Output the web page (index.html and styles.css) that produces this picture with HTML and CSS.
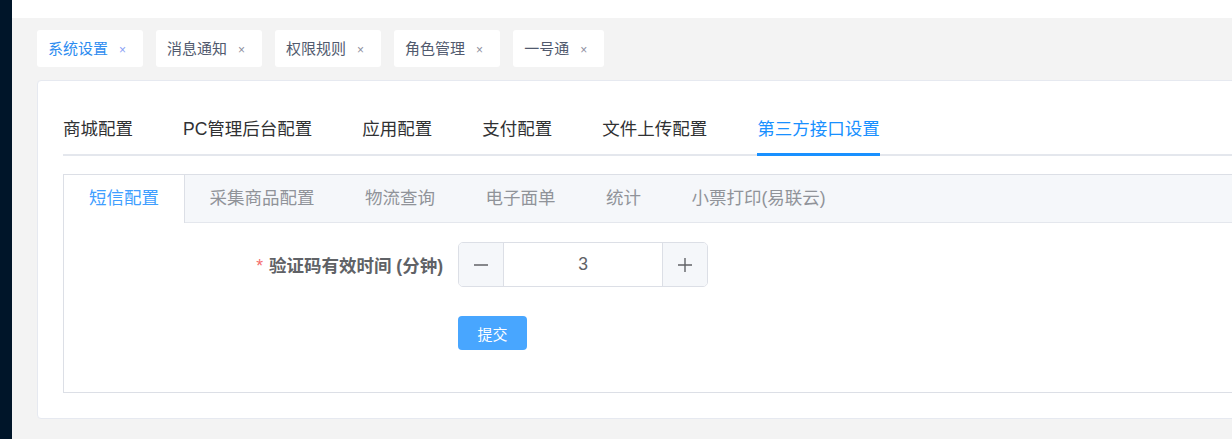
FILE: index.html
```html
<!DOCTYPE html>
<html lang="zh">
<head>
    <meta charset="UTF-8">
    <meta name="viewport" content="width=device-width, initial-scale=1.0">
    <title>第三方接口设置</title>
    <link rel="stylesheet" href="styles.css">
</head>
<body>
    <div class="layout">
      <div class="sider"></div>
      <div class="main">
        <div class="header"></div>
        <div class="content">
          <div class="tags-nav">
            <div class="tag active">系统设置<span class="close">×</span></div>
            <div class="tag">消息通知<span class="close">×</span></div>
            <div class="tag">权限规则<span class="close">×</span></div>
            <div class="tag">角色管理<span class="close">×</span></div>
            <div class="tag">一号通<span class="close">×</span></div>
          </div>

          <div class="card">
            <div class="tabs-nav">
              <div class="tab-item">商城配置</div>
              <div class="tab-item">PC管理后台配置</div>
              <div class="tab-item">应用配置</div>
              <div class="tab-item">支付配置</div>
              <div class="tab-item">文件上传配置</div>
              <div class="tab-item active">第三方接口设置</div>
            </div>

            <div class="border-card">
              <div class="card-header">
                <div class="sub-tab active">短信配置</div>
                <div class="sub-tab">采集商品配置</div>
                <div class="sub-tab">物流查询</div>
                <div class="sub-tab">电子面单</div>
                <div class="sub-tab">统计</div>
                <div class="sub-tab">小票打印(易联云)</div>
              </div>
              <div class="card-body">
                <div class="form-item">
                  <label class="form-label"><span class="required">*</span>验证码有效时间 (分钟)</label>
                  <div class="input-number">
                    <span class="step">
                      <svg width="16" height="16" viewBox="0 0 16 16"><line x1="1" y1="8" x2="15" y2="8" stroke="#606266" stroke-width="1.4"/></svg>
                    </span>
                    <input class="num" type="text" value="3">
                    <span class="step">
                      <svg width="16" height="16" viewBox="0 0 16 16"><line x1="1" y1="8" x2="15" y2="8" stroke="#606266" stroke-width="1.4"/><line x1="8" y1="1" x2="8" y2="15" stroke="#606266" stroke-width="1.4"/></svg>
                    </span>
                  </div>
                </div>
                <div class="form-item">
                  <div class="form-label"></div>
                  <button class="btn">提交</button>
                </div>
              </div>
            </div>
          </div>
        </div>
      </div>
    </div>
</body>
</html>
```

FILE: styles.css
```css
  body {
      margin: 0;
      font-family: "Liberation Sans", "Noto Sans CJK SC", sans-serif;
      overflow: hidden;
      height: 439px;
  }

  .layout {
      display: flex;
      height: 439px;
  }

  .sider {
      width: 12px;
      background-color: #001529;
  }

  .main {
      flex: 1;
      display: flex;
      flex-direction: column;
      min-width: 0;
  }

  .header {
      height: 18px;
      background-color: #fff;
  }

  .content {
      flex: 1;
      background-color: #f3f3f3;
      padding: 12px 0 0 25px;
  }

  /* 标签导航 */
  .tags-nav {
      display: flex;
      gap: 13px;
  }

  .tag {
      height: 37px;
      line-height: 37px;
      background-color: #fff;
      border-radius: 3px;
      padding: 0 17px 0 11px;
      font-size: 15px;
      color: #515a6e;
  }

  .tag .close {
      display: inline-block;
      font-size: 12px;
      color: #8e8e9e;
      margin-left: 11px;
  }

  .tag.active {
      color: #2d8cf0;
  }

  .tag.active .close {
      color: #8aa0f5;
  }

  .card {
      margin-top: 13px;
      margin-right: -30px;
      background-color: #fff;
      border: 1px solid #e6e9f0;
      border-radius: 4px;
      padding: 25px;
  }

  /* 顶部选项卡 */
  .tabs-nav {
      display: flex;
      align-items: flex-start;
      gap: 50px;
      border-bottom: 2px solid #e4e7ed;
      height: 48px;
      margin-right: -30px;
  }

  .tab-item {
      height: 47px;
      line-height: 47px;
      font-size: 17.5px;
      color: #303133;
      border-bottom: 3px solid transparent;
      white-space: nowrap;
  }

  .tab-item.active {
      color: #1890ff;
      border-bottom-color: #1890ff;
  }

  /* 卡片式子选项卡 */
  .border-card {
      margin-top: 18px;
      margin-right: -30px;
      border: 1px solid #dcdfe6;
  }

  .card-header {
      display: flex;
      height: 47px;
      background-color: #f5f7fa;
      border-bottom: 1px solid #e4e7ed;
  }

  .sub-tab {
      height: 47px;
      line-height: 47px;
      padding: 0 24.5px 0 25px;
      font-size: 17.5px;
      color: #909399;
      border-right: 1px solid transparent;
      white-space: nowrap;
  }

  .sub-tab.active {
      background-color: #fff;
      color: #409eff;
      border-right-color: #dcdfe6;
      height: 48px;
  }

  .card-body {
      padding: 19px 19px 42px;
  }

  .form-item {
      display: flex;
      align-items: center;
      margin-bottom: 29px;
  }

  .form-item:last-child {
      margin-bottom: 0;
  }

  .form-label {
      width: 360px;
      padding-right: 15px;
      text-align: right;
      font-size: 17.5px;
      font-weight: bold;
      color: #606266;
  }

  .required {
      color: #f56c6c;
      font-weight: normal;
      margin-right: 6px;
  }

  .input-number {
      display: flex;
      width: 248px;
      height: 43px;
      border: 1px solid #dcdfe6;
      border-radius: 5px;
      overflow: hidden;
  }

  .step {
      width: 44px;
      display: flex;
      align-items: center;
      justify-content: center;
      background-color: #f5f7fa;
  }

  .step:first-child {
      border-right: 1px solid #dcdfe6;
  }

  .step:last-child {
      border-left: 1px solid #dcdfe6;
  }

  .num {
      flex: 1;
      min-width: 0;
      border: none;
      outline: none;
      text-align: center;
      font-family: "Liberation Sans", "Noto Sans CJK SC", sans-serif;
      font-size: 17.5px;
      color: #606266;
  }

  .btn {
      width: 69px;
      height: 34px;
      background-color: #48a6ff;
      color: #fff;
      border: none;
      border-radius: 4px;
      font-family: "Liberation Sans", "Noto Sans CJK SC", sans-serif;
      font-size: 15px;
      padding: 0;
  }
```
